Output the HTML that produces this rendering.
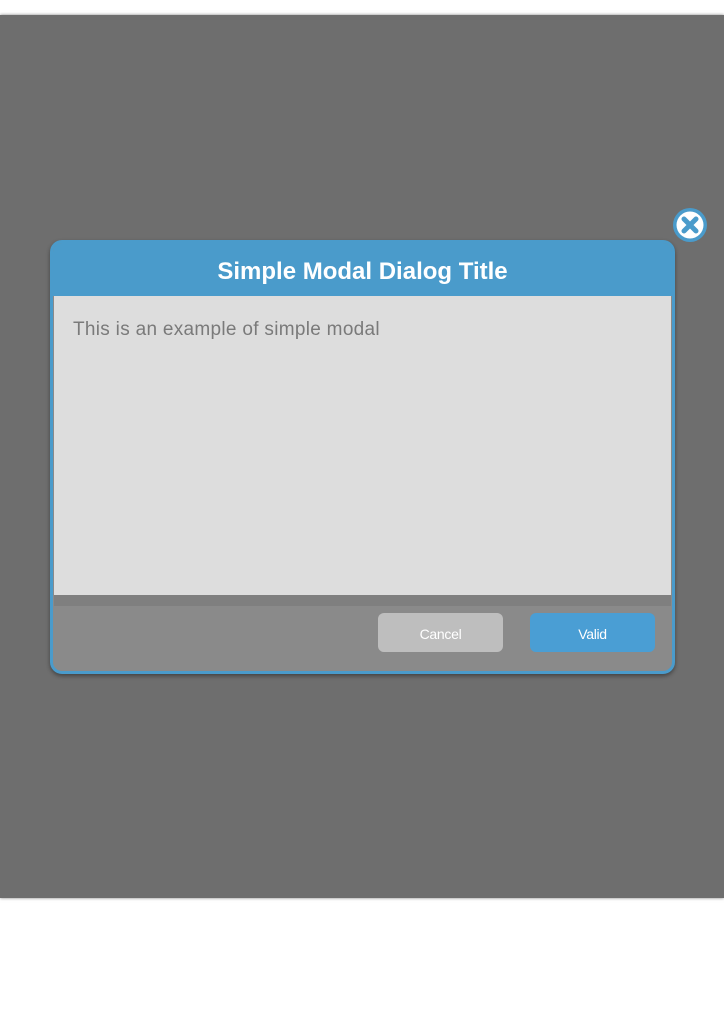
<!DOCTYPE html>
<html><head><meta charset="utf-8"><style>
html,body{margin:0;padding:0;width:724px;height:1022px;background:#fff;overflow:hidden;font-family:"Liberation Sans",Arial,sans-serif}
.ov{position:absolute;left:0;top:15px;width:724px;height:883px;background:#6e6e6e;box-shadow:0 0 3px rgba(0,0,0,.5)}
.m{position:absolute;left:50px;top:240px;width:619px;height:428px;border:3px solid #4a9bcb;border-radius:12px;background:#8a8a8a;overflow:hidden;box-shadow:0 2px 4px rgba(0,0,0,.4)}
.h{position:absolute;left:0;top:0;width:100%;height:53px;background:#4a9bcb;color:#fff;font-weight:bold;font-size:24px;text-align:center;line-height:58px;letter-spacing:0px}
.b{position:absolute;left:1px;top:53px;width:617px;height:299px;background:#dddddd;color:#7a7a7a;font-size:19px;letter-spacing:0.3px}
.b p{margin:0;position:absolute;left:19px;top:23px}
.s{position:absolute;left:1px;top:352px;width:617px;height:11px;background:#7f7f7f}
.btn{position:absolute;top:370px;width:125px;height:39px;border-radius:6px;color:#fff;font-size:14px;text-align:center;line-height:42px;letter-spacing:-0.3px}
.c{left:325px;background:#bebebe}
.v{left:477px;background:#4a9ed4}
.x{position:absolute;left:672px;top:207px}
</style></head><body>
<div class="ov">
</div>
<div class="m">
<div class="h">Simple Modal Dialog Title</div>
<div class="b"><p>This is an example of simple modal</p></div>
<div class="s"></div>
<div class="btn c">Cancel</div>
<div class="btn v">Valid</div>
</div>
<svg class="x" width="36" height="36" viewBox="0 0 36 36">
<circle cx="18" cy="18" r="17" fill="#4a9bcb"/>
<circle cx="18" cy="18" r="13.5" fill="#fff"/>
<path d="M12 12 L24 24 M24 12 L12 24" stroke="#4a9bcb" stroke-width="5" stroke-linecap="round"/>
</svg>
</body></html>
